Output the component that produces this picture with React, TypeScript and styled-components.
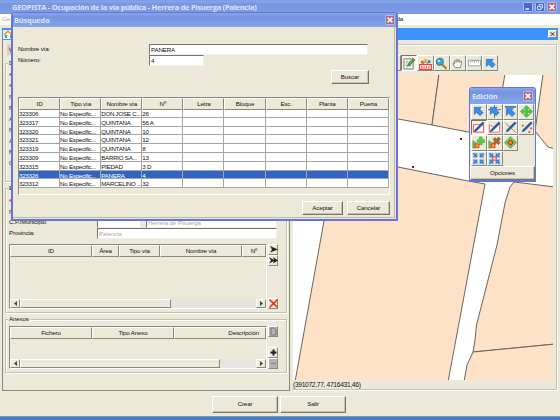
import React from "react";
import styled, { createGlobalStyle, css } from "styled-components";

const Global = createGlobalStyle`
  * { box-sizing: border-box; }
  body { margin: 0; font-family: "Liberation Sans", Arial, sans-serif; font-size: 6.2px; letter-spacing: -0.15px; color: #111; }
`;

const face = "#ece9d8";
const raised = css`
  background: ${face};
  border: 1px solid;
  border-color: #fff #8a887c #8a887c #fff;
`;
const sunken = css`
  border: 1px solid;
  border-color: #8a887c #fff #fff #8a887c;
`;

const Desktop = styled.div`
  position: relative;
  width: 560px;
  height: 420px;
  overflow: hidden;
  display: flex;
  flex-direction: column;
  background: ${face};
  border-bottom: 3px solid #3a80dc;
  line-height: 1;
  white-space: nowrap;
`;
const TitleBar = styled.div`
  height: 14px;
  flex: none;
  display: flex;
  align-items: center;
  gap: 2px;
  padding: 0 3px 0 12px;
  background: linear-gradient(#7795de 0, #86a7ee 1px, #7896e0 4px, #7a99e2 10px, #7f9fe8 13px, #7390d8);
`;
const Caption = styled.span<{ $spacing?: number }>`
  flex: 1;
  font: bold 7.5px/12px "Open Sans", "Noto Sans", sans-serif;
  letter-spacing: ${(p) => p.$spacing ?? 0}px;
  color: #dce4fa;
`;
const WindowButton = styled.span<{ $close?: boolean }>`
  width: 10px;
  height: 10px;
  border: 1px solid #a9bdf0;
  border-radius: 1.5px;
  background: ${(p) => (p.$close ? "#b4647c" : "#4468d8")};
  display: flex;
  svg { width: 8px; height: 8px; display: block; }
`;
const MenuBar = styled.div`
  height: 11px;
  flex: none;
  display: flex;
  align-items: center;
  justify-content: space-between;
  padding: 0 157px 0 2px;
  background: #fff;
  span:first-child { color: #aaa; }
`;
const FrameTitle = styled.div`
  height: 12px;
  flex: none;
  margin: 3px 2px 0;
  padding: 0 1px;
  display: flex;
  align-items: center;
  justify-content: space-between;
  background: #3a94fc;
`;
const FrameClose = styled.span`
  ${raised}
  width: 9px;
  height: 8px;
  display: flex;
  svg { width: 7px; height: 6px; }
`;
const Body = styled.div`
  height: 351px;
  flex: none;
  display: flex;
  padding: 0 3px 0 2px;
`;
const FormPane = styled.div`
  width: 288px;
  flex: none;
  border: 1px solid #8a887c;
  border-width: 0 1px 1px;
  padding: 0 2px;
  display: flex;
  flex-direction: column;
`;
const PaneTools = styled.div`
  height: 17px;
  padding: 4px 0 0 2px;
  svg { width: 10px; height: 11px; display: block; }
`;
const Group = styled.section<{ $height: number }>`
  position: relative;
  height: ${(p) => p.$height}px;
  margin-top: 6px;
  border: 1px solid #c4c1b3;
  box-shadow: inset 1px 1px #fff, 1px 1px #fff;
  padding: 0 9px 0 3px;
`;
const Legend = styled.span`
  position: absolute;
  top: -4px;
  left: 2px;
  padding: 0 1px;
  background: ${face};
`;
const StubLabels = styled.div<{ $top: number }>`
  padding: ${(p) => p.$top}px 0 0 0;
  display: flex;
  flex-direction: column;
`;
const Stub = styled.span<{ $required?: boolean }>`
  height: 11px;
  line-height: ${(p) => (p.$required ? 13 : 11)}px;
  font-size: ${(p) => (p.$required ? 8 : 6.2)}px;
  color: ${(p) => (p.$required ? "#f22" : "#222")};
  font-weight: ${(p) => (p.$required ? "bold" : "normal")};
`;
const FieldRow = styled.div`
  display: flex;
  height: 11px;
  align-items: center;
  gap: 5px;
  label { width: 84px; }
`;
const Input = styled.div<{ $width: number; $disabled?: boolean }>`
  ${sunken}
  width: ${(p) => p.$width}px;
  height: 11px;
  flex: none;
  background: #fff;
  line-height: 10px;
  padding-left: 1px;
  border-color: #77756b #f4f2e8 #f4f2e8 #77756b;
  color: ${(p) => (p.$disabled ? "#aaa89f" : "#111")};
`;
const TableArea = styled.div<{ $top: number; $height: number }>`
  display: flex;
  gap: 1px;
  margin-top: ${(p) => p.$top}px;
  height: ${(p) => p.$height}px;
`;
const ScrollBox = styled.div`
  ${sunken}
  width: 258px;
  flex: none;
  display: flex;
  flex-direction: column;
  justify-content: space-between;
`;
const HeadRow = styled.div<{ $cols: string }>`
  display: grid;
  grid-template-columns: ${(p) => p.$cols};
  height: 11px;
  flex: none;
`;
const HeadCell = styled.div<{ $right?: boolean }>`
  ${raised}
  text-align: ${(p) => (p.$right ? "right" : "center")};
  padding-right: ${(p) => (p.$right ? 6 : 0)}px;
  line-height: 10px;
`;
const ScrollBar = styled.div`
  height: 9px;
  display: flex;
  background: #e6e5e1;
`;
const ScrollArrow = styled.span`
  ${raised}
  width: 10px;
  display: flex;
  align-items: center;
  justify-content: center;
  svg { width: 3px; height: 5px; }
`;
const Thumb = styled.span<{ $width: number }>`
  ${raised}
  width: ${(p) => p.$width}px;
  margin-right: auto;
`;
const SideButtons = styled.div`
  display: flex;
  flex-direction: column;
`;
const SideButton = styled.span<{ $push?: boolean; $dim?: boolean }>`
  ${raised}
  ${(p) => p.$dim && "background: #b5b4ae;"}
  width: 10px;
  height: 11px;
  margin-top: ${(p) => (p.$push ? "auto" : "0")};
  svg { width: 9px; height: 9px; display: block; }
`;
const MapPane = styled.div`
  flex: 1;
  margin: 4px 0 1px 2px;
  border: 1px solid #c4c1b3;
  border-width: 1px 1px 1px 0;
  box-shadow: 1px 1px #fff, inset 0 1px #fff;
  display: flex;
  flex-direction: column;
  padding: 9px 1px 0 0;
`;
const Toolbar = styled.div`
  display: flex;
  height: 21px;
  padding: 1px 0 0 93px;
`;
const Tool = styled.span<{ $pressed?: boolean }>`
  ${raised}
  ${(p) => p.$pressed && "border-color:#77756b #fff #fff #77756b; background:#f6f4ea;"}
  width: 16.2px;
  height: 16px;
  display: flex;
  align-items: center;
  justify-content: center;
  svg { width: 13px; height: 13px; flex: none; }
`;
const MapView = styled.svg`
  width: 260px;
  height: 305px;
  display: block;
  flex: none;
  margin-left: 1px;
  background: #fff;
`;
const Status = styled.div`
  padding: 2px 0 0 1px;
  font-size: 6.7px;
  letter-spacing: -0.33px;
`;
const Footer = styled.div`
  flex: 1;
  display: flex;
  gap: 2px;
  padding: 5px 0 0 212px;
  border-bottom: 1px solid #98968a;
`;
const Button = styled.button<{ $width: number; $height?: number }>`
  ${raised}
  border-color: #fff #77756b #77756b #fff;
  box-shadow: inset -1px -1px #c6c3b4;
  width: ${(p) => p.$width}px;
  height: ${(p) => p.$height ?? 14}px;
  flex: none;
  padding: 0;
  font: inherit;
  letter-spacing: inherit;
  color: #111;
`;

const Dialog = styled.div`
  position: absolute;
  left: 11px;
  top: 12px;
  width: 387px;
  height: 209px;
  background: ${face};
  border: 2px solid #6674d6;
  border-width: 1px 2px 2px;
  border-radius: 4px 4px 0 0;
  overflow: hidden;
  display: flex;
  flex-direction: column;
`;
const DialogTitle = styled.div`
  height: 14px;
  flex: none;
  display: flex;
  align-items: center;
  padding: 0 1px 0 1px;
  background: linear-gradient(#86a7ee, #7693de 4px, #7c9be4 9px, #83a5ec 13px);
`;
const DialogBody = styled.div`
  flex: 1;
  margin: 0 1px 1px 0;
  border: 1px solid #bcb9ab;
  border-width: 0 1px 1px 0;
  padding: 17px 4px 0 5px;
  display: flex;
  flex-direction: column;
`;
const SearchRow = styled.div`
  display: flex;
  align-items: center;
  height: 11px;
  label { width: 131px; }
`;
const Actions = styled.div<{ $top: number; $right: number }>`
  display: flex;
  justify-content: flex-end;
  gap: 4px;
  padding: ${(p) => p.$top}px ${(p) => p.$right}px 0 0;
`;
const Results = styled.div`
  ${sunken}
  margin-top: 13px;
  height: 98px;
  width: 372px;
`;
const resultCols = "repeat(9, 41.1px)";
const ResultRow = styled.div<{ $selected?: boolean }>`
  display: grid;
  grid-template-columns: ${resultCols};
  height: 8.8px;
  width: 370px;
  background: ${(p) => (p.$selected ? "#2f66c5" : "#fff")};
  color: ${(p) => (p.$selected ? "#fff" : "#111")};
`;
const Cell = styled.span`
  border: solid #a5a5a5;
  border-width: 0 1px 1px 0;
  letter-spacing: -0.26px;
  height: 8.8px;
  line-height: 9.4px;
`;

const Palette = styled.div`
  position: absolute;
  left: 469px;
  top: 87px;
  width: 67px;
  height: 95px;
  border: 1px solid #6674d6;
  border-bottom-width: 2px;
  border-radius: 3px 3px 0 0;
  background: ${face};
  overflow: hidden;
  display: flex;
  flex-direction: column;
`;
const PaletteTitle = styled(DialogTitle)`
  height: 16px;
  padding: 0 2px;
`;
const PaletteGrid = styled.div`
  display: grid;
  grid-template-columns: repeat(4, 15.8px);
  grid-auto-rows: 15.6px;
  padding-left: 1px;
`;
const PaletteTool = styled(Tool)`
  width: 15.8px;
  height: 15.6px;
`;

const Cross = ({ color = "#fff", w = 1.5 }: { color?: string; w?: number }) => (
  <svg viewBox="0 0 8 8"><path d="M1.6 1.6L6.4 6.4M6.4 1.6L1.6 6.4" stroke={color} strokeWidth={w} /></svg>
);
const Left = () => <svg viewBox="0 0 3 5"><path d="M3 0V5L0 2.5Z" fill="#444" /></svg>;
const Right = () => <svg viewBox="0 0 3 5"><path d="M0 0V5L3 2.5Z" fill="#444" /></svg>;

const arrow = "M2.5 2.5H10L8.3 4.5L12 8.2L8.8 11.5L5 8L2.5 10.2Z";
const Icon = ({ name }: { name: string }) => {
  const blue = { fill: "#3a8ee6", stroke: "#1860b8", strokeWidth: 0.6 };
  const four = "M7 .5L10 3.5H8.2V5.8H10.5V4L13.5 7L10.5 10V8.2H8.2V10.5H10L7 13.5L4 10.5H5.8V8.2H3.5V10L.5 7L3.5 4V5.8H5.8V3.5H4Z";
  const plus = "M8 1H11V4H13.5V7H11V9.5H8V7H5.5V4H8Z";
  const pen = <path d="M2.5 11.5L3.5 9.2L11.5 1.2L13 2.5L5 10.6Z" fill="#1d62b4" stroke="#123f7c" strokeWidth=".7" />;
  const mini = "M.8 2.2L2.2 .8L3.8 2.2L5.6 1.2V5.6H1.2L2.2 3.8Z";
  const corners = [0, 90, 180, 270].map((r) => (
    <path key={r} d={mini} fill="#3a8ee6" stroke="#2a72c8" strokeWidth=".3" transform={`rotate(${r} 7 7)`} />
  ));
  const content: Record<string, React.ReactNode> = {
    arrow: <path d={arrow} {...blue} />,
    arrowPlus: <><path d="M7 0V14M0 5H14" stroke="#447" strokeWidth=".8" /><path d={arrow} {...blue} /></>,
    arrowBar: <><path d="M1 2H13" stroke="#124d98" strokeWidth="1.4" /><path d={arrow} {...blue} transform="translate(0 1)" /></>,
    move: <path d={four} fill="#4cc63c" stroke="#269622" strokeWidth=".5" />,
    rect: <><path d="M1.5 4H12.5V12H1.5Z" fill="#fff" stroke="#e44" />{pen}</>,
    poly: <><path d="M1.5 4V12H12.5V3L7 7.5Z" fill="#fff" stroke="#e66" />{pen}</>,
    line: <><path d="M1.5 2.5L7 7L12.5 12.5" fill="none" stroke="#e55" />{pen}</>,
    points: <><path d="M2 4h2v2H2zM9 11h2v2H9zM11 7h2v2h-2z" fill="#e44" />{pen}</>,
    add: <><path d={plus} fill="#5bcc45" stroke="#2a9828" strokeWidth=".5" /><path d="M1 5L6 9L3 13H1Z" fill="#58bd69" stroke="#6a4" /><path d="M3.5 8.5h4v4h-4z" fill="#ff9e20" stroke="#e33" /></>,
    remove: <><path d={plus} fill="#a96832" stroke="#80461c" strokeWidth=".5" transform="rotate(45 9.5 5.2)" /><path d="M1 5L6 9L3 13H1Z" fill="#58bd69" stroke="#6a4" /><path d="M3.5 8.5h4v4h-4z" fill="#ff9e20" stroke="#e33" /></>,
    moveVertex: <><path d={four} fill="#5bcc45" stroke="#269622" strokeWidth=".5" /><path d="M5 5h4v4H5z" fill="#ff8b20" stroke="#d22" /></>,
    shrink: corners,
    shrinkX: <>{corners}<path d="M5.2 5.2h3.6v3.6H5.2z" fill="#fdd" stroke="#e33" /></>,
    editGrid: <><path d="M1 2H11V13H1Z" fill="#fff" stroke="#777" /><path d="M4.3 2V13M7.6 2V13M1 5.5H11M1 9H11" stroke="#999" strokeWidth=".7" /><path d="M5 10L5.5 7.5L11 1.5L13 3.2L7.5 9Z" fill="#35b52d" stroke="#1d7a1c" strokeWidth=".6" /><path d="M10.5 2L12.5 3.8" stroke="#e44" strokeWidth="1.5" /></>,
    snap: <><circle cx="7" cy="3.5" r="1.8" fill="#ffb332" /><circle cx="3.5" cy="5.5" r="1.7" fill="#e95828" /><circle cx="10.8" cy="5" r="1.7" fill="#327ed4" /><path d="M4 8L7 5L10 8" stroke="#3a8c54" fill="none" /><path d="M.7 8.2H13.3V13.3H.7Z" fill="#fff" stroke="#ee4035" strokeWidth="1.2" /><path d="M3 10v2M5.5 10v2M8 10v2M10.7 10v2" stroke="#ee4035" strokeWidth="1.3" /></>,
    zoom: <><path d="M7.5 8L12.5 12.8" stroke="#b8862d" strokeWidth="2.4" /><circle cx="5.2" cy="5.2" r="3.7" fill="#3ca7e8" stroke="#438878" strokeWidth="1.3" /><circle cx="4.2" cy="4.2" r="1.3" fill="#aee4fa" /></>,
    hand: <path d="M4.5 11.5L2 7.5Q2 6 4 7.5L3.3 4.5Q4 3 5 4.5L5.5 6L5.6 3Q6.8 1.8 7.3 3.2L7.5 5.5L8.3 3Q9.5 2.5 9.5 4L9.4 6L10.5 4.5Q12 4.5 11.3 6.5L10 11.5Z" fill="#fff" stroke="#777" strokeWidth=".9" />,
    ruler: <><path d="M.5 3.5H13.5V9.5H.5Z" fill="#fff" stroke="#9a9dab" /><path d="M3 3.5V6.5M5 3.5V5.5M7 3.5V6.5M9 3.5V5.5M11 3.5V6.5" stroke="#8a8da0" strokeWidth=".8" /></>,
  };
  return <svg viewBox="0 0 14 14">{content[name]}</svg>;
};

const Scroll = ({ thumb }: { thumb: number }) => (
  <ScrollBar><ScrollArrow><Left /></ScrollArrow><Thumb $width={thumb} /><ScrollArrow><Right /></ScrollArrow></ScrollBar>
);

const results = [
  ["323306", "DON JOSE C...", "26"],
  ["323317", "QUINTANA", "56 A"],
  ["323320", "QUINTANA", "10"],
  ["323321", "QUINTANA", "12"],
  ["323319", "QUINTANA", "8"],
  ["323309", "BARRIO SA...", "13"],
  ["323315", "PIEDAD", "3 D"],
  ["323326", "PANERA", "4"],
  ["323312", "MARCELINO ...", "32"],
];
const resultHeads = ["ID", "Tipo vía", "Nombre vía", "Nº", "Letra", "Bloque", "Esc.", "Planta", "Puerta"];
const mapTools = ["editGrid", "snap", "zoom", "hand", "ruler", "arrow"];
const editTools = ["arrow", "arrowPlus", "arrowBar", "move", "rect", "poly", "line", "points", "add", "remove", "moveVertex", "", "shrink", "shrinkX"];

const CityMap = () => (
  <MapView viewBox="293 75 260 305">
    <g fill="#fde2c8" stroke="#69645e" strokeWidth="1">
      <path d="M290 74V100L398 119L432 125L439 74Z" />
      <path d="M439 74L432 125L494 137L505 74Z" />
      <path d="M543 74L535 131L548 147L555 149V74Z" />
      <path d="M333 155L398 167L463 180L485 184L448 382H295L324 221Z" />
      <path d="M555 187L514 182L510 187L505 203L497 245L476.5 325L475 340L473 352L555 344Z" />
      <path d="M473 352L467 365L464 382H556V344Z" />
    </g>
    <path d="M412 166h2v2h-2zM460 138h2v2h-2z" fill="#8c1212" />
  </MapView>
);

export default function App() {
  return (
    <Desktop>
      <Global />
      <TitleBar>
        <Caption $spacing={-0.28}>GEOPISTA - Ocupación de la vía pública - Herrera de Pisuerga (Palencia)</Caption>
        <WindowButton><svg viewBox="0 0 8 8"><path d="M1.5 6H5" stroke="#fff" strokeWidth="1.4" /></svg></WindowButton>
        <WindowButton><svg viewBox="0 0 8 8"><path d="M3 3V1.5H6.5V5H5M1.5 3.3H5V6.5H1.5Z" fill="none" stroke="#dfe8ff" strokeWidth=".9" /></svg></WindowButton>
        <WindowButton $close><Cross /></WindowButton>
      </TitleBar>
      <MenuBar><span>Ge</span><span>da</span></MenuBar>
      <FrameTitle>
        <svg width="10" height="11" viewBox="0 0 10 11"><path d="M0 1H10V10H0Z" fill="#f7f0d8" /><path d="M1 6L5 2L9 6" fill="none" stroke="#e49622" strokeWidth="1.5" /><path d="M2 6H4V9H2ZM7 6H9V9H7Z" fill="#3e9ad6" /></svg>
        <FrameClose><Cross color="#111" w={1.2} /></FrameClose>
      </FrameTitle>
      <Body>
        <FormPane>
          <PaneTools><svg viewBox="0 0 10 11"><path d="M0 0H10V11H0Z" fill="#d3d2ca" /><path d="M1 3L5 6L4 9Z" fill="#c85a3c" /></svg></PaneTools>
          <Group $height={119}>
            <Legend>D</Legend>
            <StubLabels $top={5}>
              <Stub $required>*</Stub><Stub $required>*</Stub>
              {["N", "M", "A", "N", "A", "M", "O"].map((t, i) => <Stub key={i}>{t}</Stub>)}
            </StubLabels>
          </Group>
          <Group $height={125}>
            <Legend>E</Legend>
            <StubLabels $top={6}><Stub $required>*</Stub><Stub>N</Stub></StubLabels>
            <FieldRow><label>C.P./Municipio</label><Input $width={44} /><Input $width={131} $disabled>Herrera de Pisuerga</Input></FieldRow>
            <FieldRow><label>Provincia:</label><Input $width={180} $disabled>Palencia</Input></FieldRow>
            <TableArea $top={5} $height={65}>
              <ScrollBox>
                <HeadRow $cols="82px 27px 41px 82px 1fr">
                  {["ID", "Área", "Tipo vía", "Nombre vía", "Nº"].map((h) => <HeadCell key={h}>{h}</HeadCell>)}
                </HeadRow>
                <Scroll thumb={151} />
              </ScrollBox>
              <SideButtons>
                <SideButton><svg viewBox="0 0 9 9"><path d="M1 1L9 4.5L1 7.5L3 4.5Z" fill="#222" /></svg></SideButton>
                <SideButton><svg viewBox="0 0 9 9"><path d="M0 1L5 4L4 1L9 4.5L4 7.5L5 5L0 7.5L2 4.5Z" fill="#222" /></svg></SideButton>
                <SideButton $push><svg viewBox="0 0 9 9"><path d="M.5 .5L8.5 8.5M8.5 .5L.5 8.5" stroke="#ee3a1c" strokeWidth="1.6" /></svg></SideButton>
              </SideButtons>
            </TableArea>
          </Group>
          <Group $height={54}>
            <Legend>Anexos</Legend>
            <TableArea $top={6} $height={43}>
              <ScrollBox>
                <HeadRow $cols="82px 82px 1fr">
                  <HeadCell>Fichero</HeadCell><HeadCell>Tipo Anexo</HeadCell><HeadCell $right>Descripción</HeadCell>
                </HeadRow>
                <Scroll thumb={200} />
              </ScrollBox>
              <SideButtons>
                <SideButton $dim><svg viewBox="0 0 9 9"><path d="M2 1H5L7 3V8H2Z" fill="none" stroke="#777" /></svg></SideButton>
                <SideButton $push><svg viewBox="0 0 9 9"><path d="M4.5 1.5V7.5M1.5 4.5H7.5" stroke="#222" strokeWidth="2" /></svg></SideButton>
                <SideButton $dim><svg viewBox="0 0 9 9"><path d="M2 4.5H7" stroke="#888" strokeWidth="1.5" /></svg></SideButton>
              </SideButtons>
            </TableArea>
          </Group>
        </FormPane>
        <MapPane>
          <Toolbar>
            <Tool />
            {mapTools.map((t, i) => <Tool key={t} $pressed={i === 0}><Icon name={t} /></Tool>)}
          </Toolbar>
          <CityMap />
          <Status>(391072,77, 4716431,46)</Status>
        </MapPane>
      </Body>
      <Footer>
        <Button $width={66} $height={17}>Crear</Button>
        <Button $width={66} $height={17}>Salir</Button>
      </Footer>

      <Dialog>
        <DialogTitle><Caption $spacing={-0.2}>Búsqueda</Caption><WindowButton $close><Cross /></WindowButton></DialogTitle>
        <DialogBody>
          <SearchRow><label>Nombre vía:</label><Input $width={219}>PANERA</Input></SearchRow>
          <SearchRow><label>Número:</label><Input $width={55}>4</Input></SearchRow>
          <Actions $top={4} $right={21}><Button $width={38}>Buscar</Button></Actions>
          <Results>
            <HeadRow $cols={resultCols}>{resultHeads.map((h) => <HeadCell key={h}>{h}</HeadCell>)}</HeadRow>
            {results.map(([id, street, number]) => (
              <ResultRow key={id} $selected={id === "323326"}>
                <Cell>{id}</Cell><Cell>No Especific...</Cell><Cell>{street}</Cell><Cell>{number}</Cell>
                <Cell /><Cell /><Cell /><Cell /><Cell />
              </ResultRow>
            ))}
          </Results>
          <Actions $top={6} $right={0}><Button $width={41}>Aceptar</Button><Button $width={43}>Cancelar</Button></Actions>
        </DialogBody>
      </Dialog>

      <Palette>
        <PaletteTitle><Caption $spacing={-0.2}>Edición</Caption><WindowButton $close><Cross /></WindowButton></PaletteTitle>
        <PaletteGrid>
          {editTools.map((t, i) => (t ? <PaletteTool key={i} $pressed={i === 4}><Icon name={t} /></PaletteTool> : <span key={i} />))}
        </PaletteGrid>
        <Button $width={65}>Opciones</Button>
      </Palette>
    </Desktop>
  );
}
